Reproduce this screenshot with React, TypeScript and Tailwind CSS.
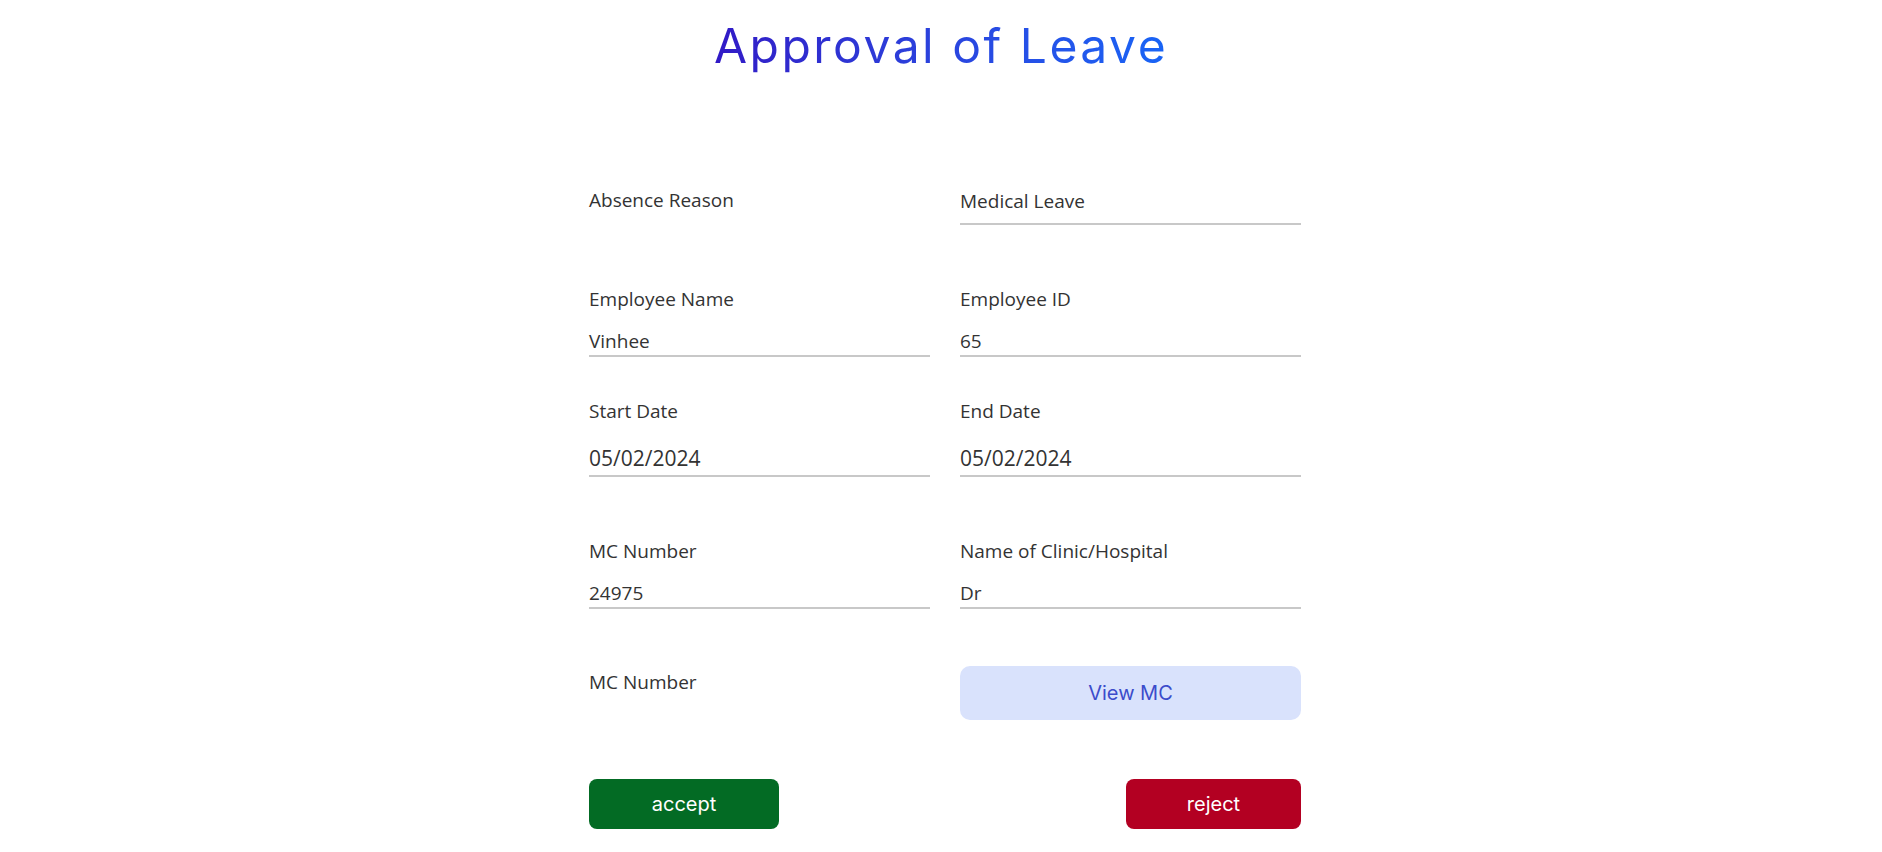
const labelCls = "text-[19px] leading-[20px] text-[#333333]"
const valueCls = "text-[19px] leading-[20px] text-[#333333] border-b-2 border-[#c8c8c8]"

const Field = ({ label, value, pb, gap, big }: { label: string; value: string; pb: string; gap: string; big?: boolean }) => (
    <div className="flex flex-col">
        <div className={labelCls}>{label}</div>
        <div className={`${valueCls} ${gap} ${pb} ${big ? "text-[21px]" : ""}`}>{value}</div>
    </div>
)

export default function App() {
    return (
        <div className="w-full min-h-screen bg-white" style={{ fontFamily: "'Open Sans', 'Noto Sans', sans-serif" }}>
            <h1 className="pt-[17px] text-center leading-[58px]">
                <span
                    className="inline-block text-[48px] tracking-[2.5px] font-normal bg-gradient-to-r from-[#3119c6] to-[#1764f6] bg-clip-text text-transparent"
                    style={{ fontFamily: "Inter, sans-serif" }}
                >
                    Approval of Leave
                </span>
            </h1>

            <div className="flex justify-center pl-[8px]">
                <div className="w-[712px] flex flex-col mt-[104px]">
                    {/* row 1 */}
                    <div className="grid grid-cols-2 gap-x-[30px]">
                        <div className={labelCls}>Absence Reason</div>
                        <div className={`${valueCls} pt-[1px] pb-[12px]`}>Medical Leave</div>
                    </div>

                    {/* row 2 */}
                    <div className="grid grid-cols-2 gap-x-[30px] mt-[64px]">
                        <Field label="Employee Name" value="Vinhee" gap="mt-[22px]" pb="pb-[4px]" />
                        <Field label="Employee ID" value="65" gap="mt-[22px]" pb="pb-[4px]" />
                    </div>

                    {/* row 3 */}
                    <div className="grid grid-cols-2 gap-x-[30px] mt-[44px]">
                        <Field label="Start Date" value="05/02/2024" gap="mt-[27px]" pb="pb-[7px]" big />
                        <Field label="End Date" value="05/02/2024" gap="mt-[27px]" pb="pb-[7px]" big />
                    </div>

                    {/* row 4 */}
                    <div className="grid grid-cols-2 gap-x-[30px] mt-[64px]">
                        <Field label="MC Number" value="24975" gap="mt-[22px]" pb="pb-[4px]" />
                        <Field label="Name of Clinic/Hospital" value="Dr" gap="mt-[22px]" pb="pb-[4px]" />
                    </div>

                    {/* row 5 */}
                    <div className="grid grid-cols-2 gap-x-[30px] mt-[57px]">
                        <div className={`${labelCls} pt-[6px]`}>MC Number</div>
                        <button
                            className="h-[54px] rounded-[10px] bg-[#d9e2fc] text-[#3b4ccb] text-[20px]"
                            style={{ fontFamily: "Inter, sans-serif" }}
                        >
                            View MC
                        </button>
                    </div>

                    {/* row 6 */}
                    <div className="flex justify-between mt-[59px]" style={{ fontFamily: "Inter, sans-serif" }}>
                        <button className="w-[190px] h-[50px] rounded-[8px] bg-[#036b24] text-white text-[20px]">accept</button>
                        <button className="w-[175px] h-[50px] rounded-[8px] bg-[#b30022] text-white text-[20px]">reject</button>
                    </div>
                </div>
            </div>
        </div>
    )
}
